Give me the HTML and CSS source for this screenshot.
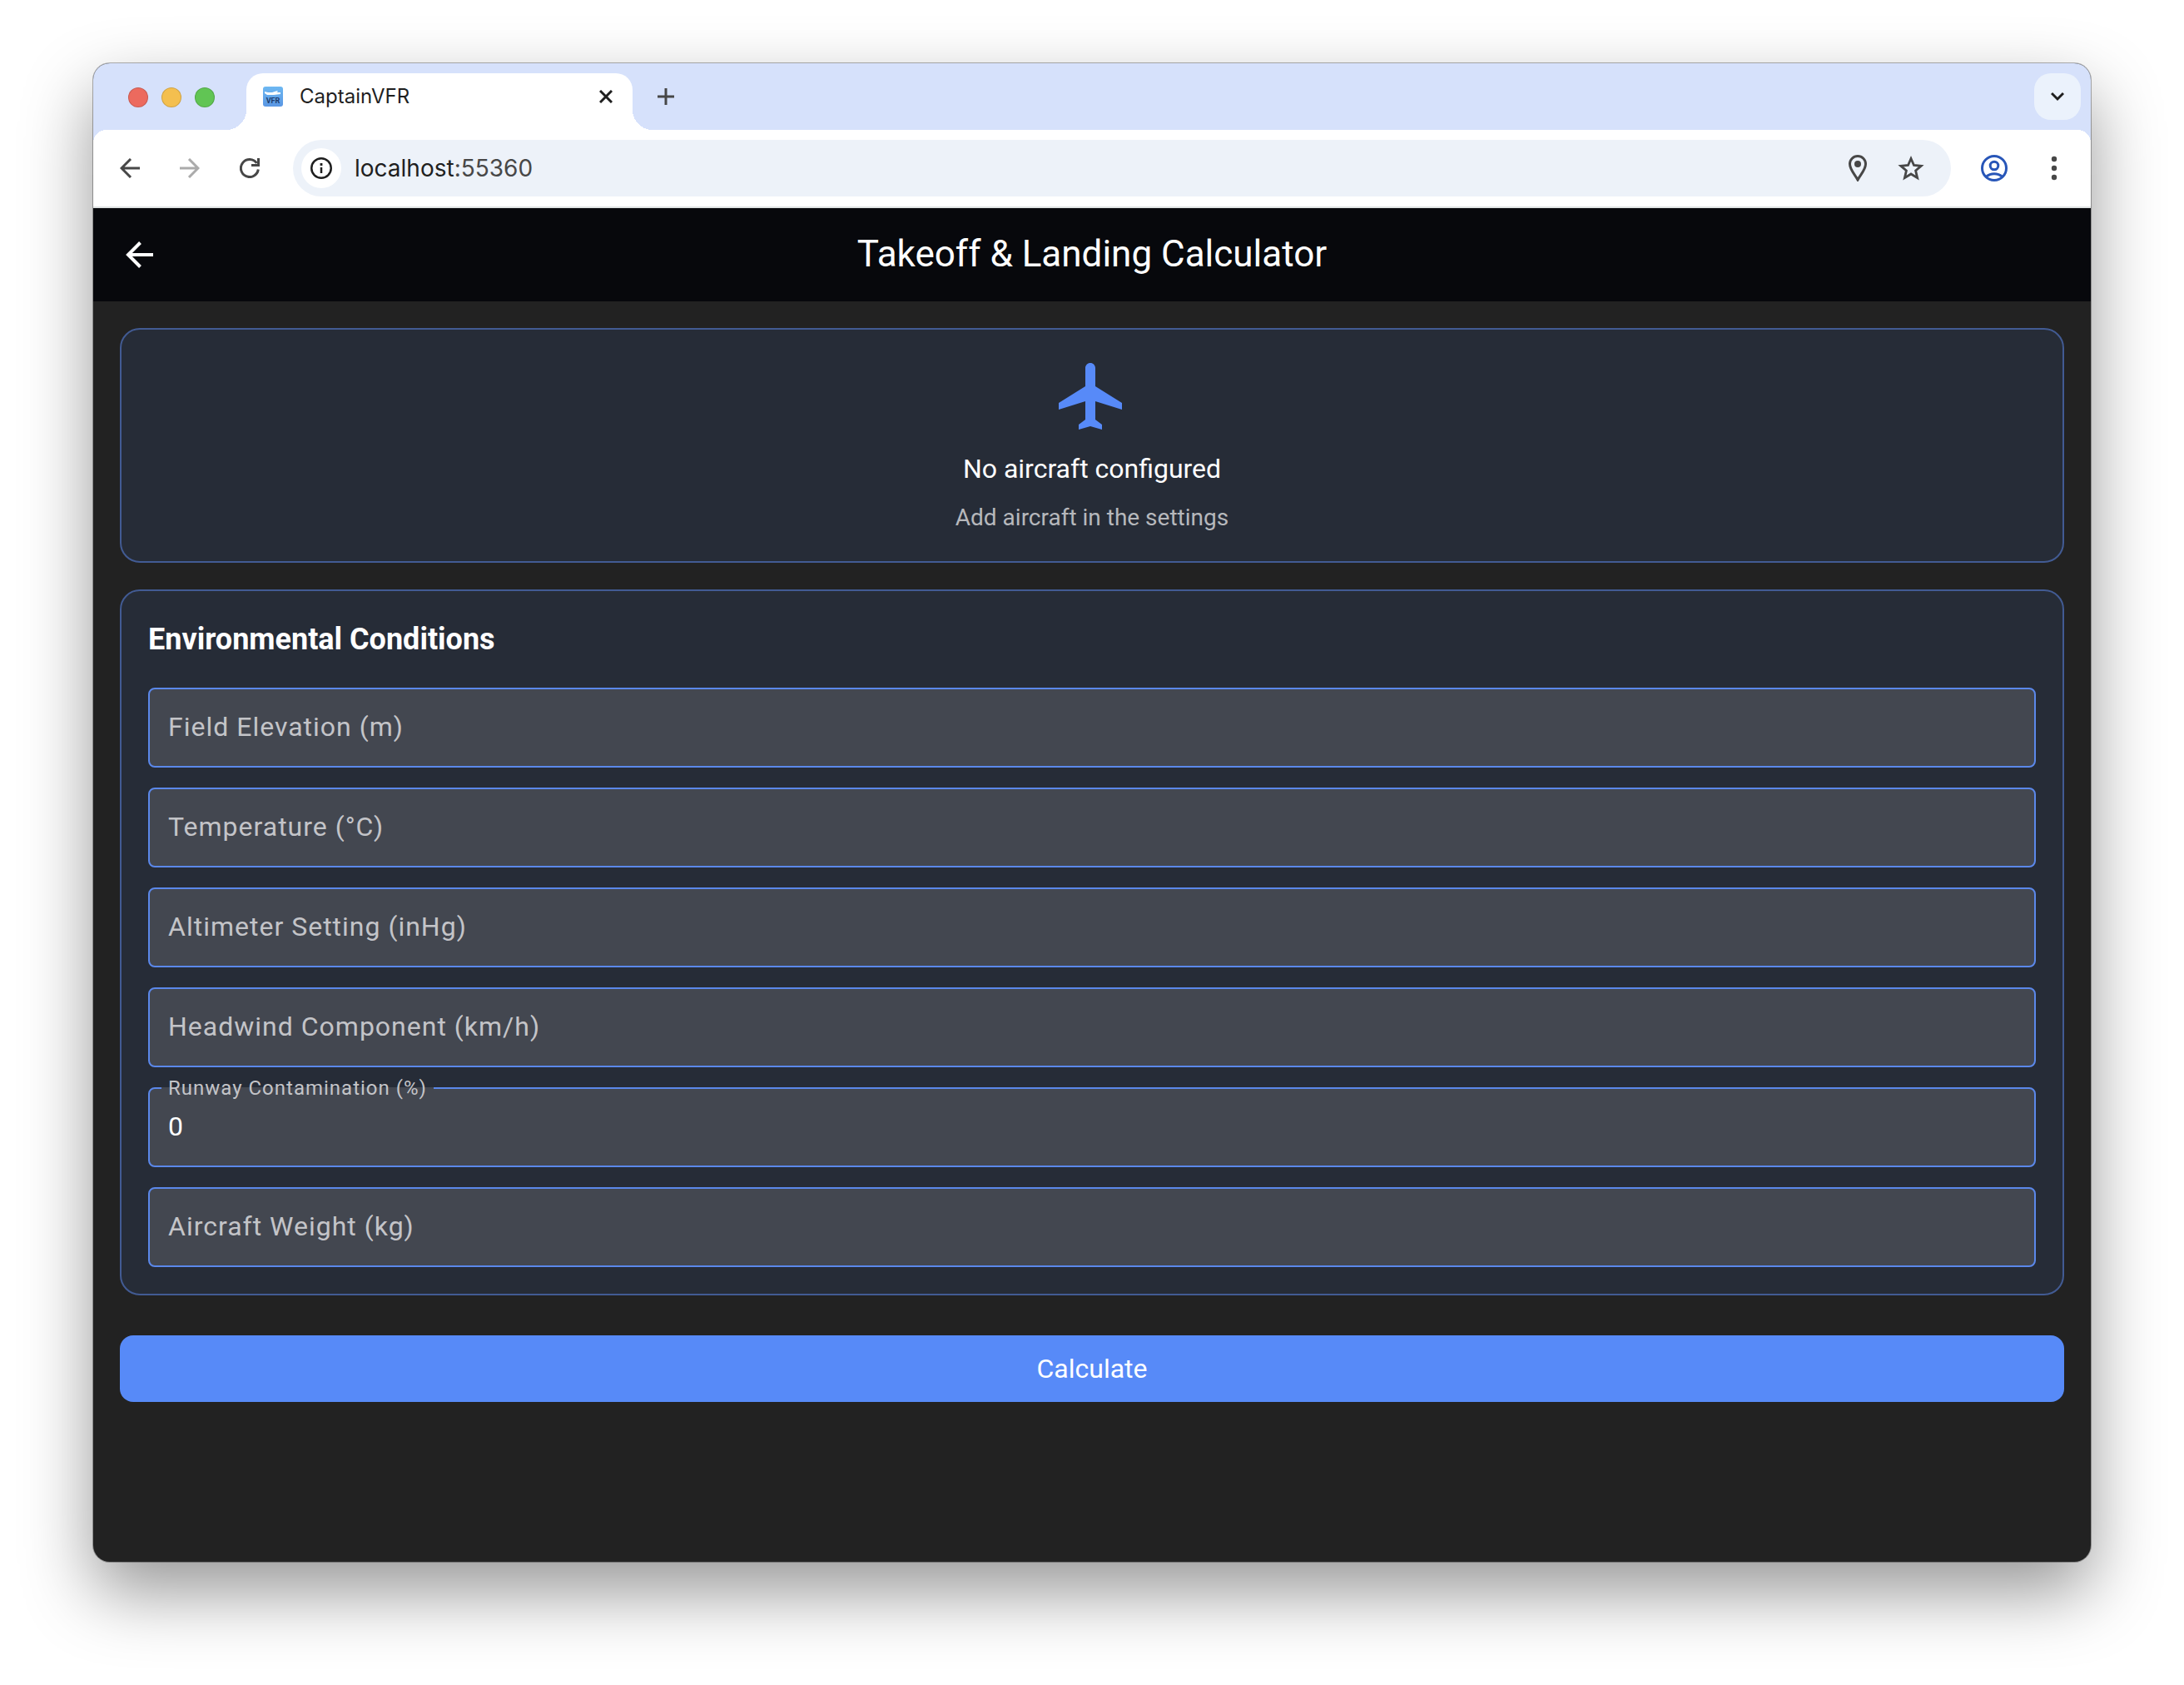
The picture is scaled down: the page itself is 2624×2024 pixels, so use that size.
FILE: index.html
```html
<!DOCTYPE html>
<html lang="en">
<head>
<meta charset="utf-8">
<title>CaptainVFR</title>
<link rel="stylesheet" href="styles.css">
</head>
<body>
<div class="window">
  <div class="tabstrip">
    <div class="lights">
      <span class="light light-close"></span>
      <span class="light light-min"></span>
      <span class="light light-max"></span>
    </div>
    <div class="tab">
      <svg class="favicon" width="24" height="24" viewBox="0 0 24 24" aria-hidden="true">
        <defs><linearGradient id="sky" x1="0" y1="0" x2="0" y2="1"><stop offset="0" stop-color="#6db8f2"/><stop offset="1" stop-color="#5a96e3"/></linearGradient></defs>
        <rect width="24" height="24" rx="3" fill="url(#sky)"/>
        <path d="M2 6l4 1 5 0 6-2 1 1-2 1h5v2l-8 1H5L2 8z" fill="#fff"/>
        <text x="12" y="20" text-anchor="middle" class="favicon-text">VFR</text>
      </svg>
      <span class="tab-title">CaptainVFR</span>
      <button class="icon-button tab-close" aria-label="Close tab">
        <svg width="16" height="16" viewBox="0 0 16 16" fill="none" stroke="#1f1f1f" stroke-width="3"><path d="M1 1l14 14M15 1L1 15"/></svg>
      </button>
    </div>
    <button class="icon-button new-tab" aria-label="New tab">
      <svg width="20" height="20" viewBox="0 0 20 20" fill="none" stroke="#474747" stroke-width="3"><path d="M10 0v20M0 10h20"/></svg>
    </button>
    <button class="icon-button tab-search" aria-label="Search tabs">
      <svg width="16" height="16" viewBox="0 0 16 16" fill="none" stroke="#1f1f1f" stroke-width="3"><path d="M1 4l7 7 7-7"/></svg>
    </button>
  </div>

  <div class="toolbar">
    <div class="nav">
      <button class="icon-button" aria-label="Back">
        <svg width="24" height="24" viewBox="0 0 24 24" fill="none" stroke="#474747" stroke-width="3"><path d="M24 12H2M13 1L2 12l11 11"/></svg>
      </button>
      <button class="icon-button" aria-label="Forward">
        <svg width="24" height="24" viewBox="0 0 24 24" fill="none" stroke="#ababab" stroke-width="3"><path d="M0 12h22M11 1l11 11-11 11"/></svg>
      </button>
      <button class="icon-button" aria-label="Reload">
        <svg width="24" height="24" viewBox="0 0 24 24" fill="none" stroke="#474747" stroke-width="3"><path d="M22.300 13.500A10.500 10.500 0 1 1 20.500 6M22.500 0v8.500H14"/></svg>
      </button>
    </div>
    <div class="omnibox">
      <button class="icon-button site-info" aria-label="Site information">
        <svg width="26" height="26" viewBox="0 0 26 26" fill="none" stroke="#1f1f1f" stroke-width="2.500"><circle cx="13" cy="13" r="11.750"/><path d="M13 12v7"/><path d="M13 7v3" stroke-width="2.800"/></svg>
      </button>
      <span class="url">localhost<span class="port">:55360</span></span>
      <button class="icon-button" aria-label="Location">
        <svg width="32" height="32" viewBox="0 0 32 32"><path d="M16 30C13 24 6.500 18 6.500 11a9.500 9.500 0 0 1 19 0C25.500 18 19 24 16 30z" fill="none" stroke="#474747" stroke-width="3"/><circle cx="16" cy="11" r="4" fill="#474747"/></svg>
      </button>
      <button class="icon-button" aria-label="Bookmark">
        <svg width="32" height="32" viewBox="0 0 32 32" fill="none" stroke="#474747" stroke-width="2.800"><path d="M16 4.500l3.500 8 8.700.8-6.600 5.700 2 8.600-7.600-4.600-7.600 4.600 2-8.600-6.600-5.700 8.700-.8z"/></svg>
      </button>
    </div>
    <button class="icon-button" aria-label="Profile">
      <svg width="32" height="32" viewBox="0 0 32 32" fill="none" stroke="#2856b8" stroke-width="3"><circle cx="16" cy="16" r="14.500"/><circle cx="16" cy="13" r="4.800"/><path d="M6 26.500c6-5 14-5 20 0"/></svg>
    </button>
    <button class="icon-button" aria-label="Menu">
      <svg width="32" height="32" viewBox="0 0 32 32" fill="#474747"><circle cx="16" cy="5" r="3.200"/><circle cx="16" cy="16" r="3.200"/><circle cx="16" cy="27" r="3.200"/></svg>
    </button>
  </div>

  <header class="appbar">
    <button class="icon-button" aria-label="Go back">
      <svg width="36" height="36" viewBox="0 0 36 36" fill="none" stroke="#fff" stroke-width="4"><path d="M34 18H4M18.500 3.500L4 18l14.500 14.500"/></svg>
    </button>
    <h1 class="title">Takeoff &amp; Landing Calculator</h1>
  </header>

  <main class="content">
    <section class="card empty">
      <svg class="plane" width="96" height="96" viewBox="0 0 24 24" fill="#578af8" aria-hidden="true"><path d="M21 16v-2l-8-5V3.500c0-.83-.67-1.500-1.500-1.500S10 2.670 10 3.500V9l-8 5v2l8-2.500V19l-2 1.500V22l3.500-1 3.500 1v-1.500L13 19v-5.500l8 2.500z"/></svg>
      <p class="empty-title">No aircraft configured</p>
      <p class="empty-hint">Add aircraft in the settings</p>
    </section>

    <form class="form">
      <section class="card conditions">
        <h2 class="heading">Environmental Conditions</h2>
        <div class="fields">
          <div class="field"><input class="input" id="elevation" type="text"><label class="label" for="elevation">Field Elevation (m)</label></div>
          <div class="field"><input class="input" id="temperature" type="text"><label class="label" for="temperature">Temperature (°C)</label></div>
          <div class="field"><input class="input" id="altimeter" type="text"><label class="label" for="altimeter">Altimeter Setting (inHg)</label></div>
          <div class="field"><input class="input" id="headwind" type="text"><label class="label" for="headwind">Headwind Component (km/h)</label></div>
          <div class="field"><input class="input" id="contamination" type="text" value="0"><label class="label label-floating" for="contamination">Runway Contamination (%)</label></div>
          <div class="field"><input class="input" id="weight" type="text"><label class="label" for="weight">Aircraft Weight (kg)</label></div>
        </div>
      </section>
      <button class="calculate" type="button">Calculate</button>
    </form>
  </main>
</div>
</body>
</html>
```

FILE: styles.css
```css
* {
  box-sizing: border-box;
}

body {
  display: flex;
  min-height: 100vh;
  margin: 0;
  padding: 76px 112px 148px;
  background: #fff;
  font-family: Roboto, "Liberation Sans", sans-serif;
}

h1,
h2,
p {
  margin: 0;
}

button {
  padding: 0;
  border: 0;
  font: inherit;
}

svg {
  display: block;
}

.window {
  display: flex;
  flex: 1;
  flex-direction: column;
  min-width: 0;
  overflow: hidden;
  border-radius: 20px;
  background: #222;
  box-shadow: 0 0 0 1px rgba(0, 0, 0, 0.3), 0 36px 84px rgba(0, 0, 0, 0.41);
}

.icon-button {
  display: flex;
  flex: none;
  align-items: center;
  justify-content: center;
  background: none;
}

/* Tab strip */
.tabstrip {
  display: flex;
  align-items: flex-end;
  height: 80px;
  padding: 0 12px 0 42px;
  background: #d6e1fb;
  font-family: Inter, "Liberation Sans", sans-serif;
}

.lights {
  display: flex;
  gap: 16px;
  align-self: center;
  width: 142px;
  padding-top: 2px;
}

.light {
  width: 24px;
  height: 24px;
  border: 1px solid rgba(0, 0, 0, 0.15);
  border-radius: 50%;
}

.light-close {
  background: #ec6a5e;
}

.light-min {
  background: #f4bf4f;
}

.light-max {
  background: #61c554;
}

.tab {
  position: relative;
  display: flex;
  align-items: center;
  width: 464px;
  height: 68px;
  padding: 0 24px 12px 20px;
  border-radius: 20px 20px 0 0;
  background: #fff;
}

.tab::before,
.tab::after {
  position: absolute;
  bottom: 0;
  width: 24px;
  height: 24px;
  content: "";
}

.tab::before {
  right: 100%;
  background: radial-gradient(circle at 0 0, transparent 24px, #fff 24px);
}

.tab::after {
  left: 100%;
  background: radial-gradient(circle at 100% 0, transparent 24px, #fff 24px);
}

.favicon-text {
  fill: #1d3c6e;
  font: bold 9px Roboto, sans-serif;
}

.tab-title {
  flex: 1;
  padding-left: 20px;
  color: #1f1f1f;
  font-size: 24px;
  line-height: 32px;
}

.new-tab {
  width: 56px;
  height: 56px;
  margin: 0 auto 12px 12px;
}

.tab-search {
  width: 56px;
  height: 56px;
  margin-bottom: 12px;
  border-radius: 20px;
  background: #ebf2fc;
}

/* Address bar */
.toolbar {
  display: flex;
  align-items: center;
  height: 94px;
  padding: 0 28px 0 32px;
  border-bottom: 2px solid #dfe3e3;
  background:
    radial-gradient(circle at 16px 16px, #fff 16px, #d6e1fb 16px) 0 0 / 16px 16px no-repeat,
    radial-gradient(circle at 0 16px, #fff 16px, #d6e1fb 16px) 100% 0 / 16px 16px no-repeat,
    #fff;
  font-family: Inter, "Liberation Sans", sans-serif;
}

.nav {
  display: flex;
  gap: 48px;
  margin-right: 40px;
}

.omnibox {
  display: flex;
  flex: 1;
  gap: 32px;
  align-items: center;
  height: 68px;
  margin-right: 36px;
  padding: 0 32px 0 10px;
  border-radius: 34px;
  background: #edf2f9;
}

.site-info {
  width: 48px;
  height: 48px;
  margin-right: -16px;
  border-radius: 50%;
  background: #fff;
}

.url {
  flex: 1;
  color: #1f1f1f;
  font-size: 28px;
  line-height: 40px;
}

.port {
  color: #474747;
}

.toolbar > .icon-button + .icon-button {
  margin-left: 40px;
}

/* App bar */
.appbar {
  display: grid;
  grid-template-columns: 36px 1fr 36px;
  align-items: center;
  height: 112px;
  padding: 0 38px;
  background: #07080c;
}

.title {
  padding-bottom: 2px;
  color: #fff;
  font-size: 44px;
  font-weight: 400;
  line-height: 56px;
  text-align: center;
}

/* Page */
.content {
  display: flex;
  flex-direction: column;
  gap: 32px;
  padding: 32px;
}

.card {
  padding: 32px;
  border: 2px solid #425b93;
  border-radius: 24px;
  background: #262c37;
}

.empty {
  display: flex;
  flex-direction: column;
  align-items: center;
}

.empty-title {
  margin: 15px 0;
  color: #fff;
  font-size: 32px;
  line-height: 48px;
}

.empty-hint {
  color: #b6b8bc;
  font-size: 28px;
  line-height: 40px;
}

.form {
  display: flex;
  flex-direction: column;
  gap: 48px;
}

.heading {
  margin-bottom: 32px;
  color: #fff;
  font-size: 36px;
  font-weight: 700;
  line-height: 52px;
}

.fields {
  display: flex;
  flex-direction: column;
  gap: 24px;
}

.field {
  position: relative;
}

.input {
  display: block;
  width: 100%;
  height: 96px;
  padding: 0 22px 2px;
  border: 2px solid #5b88ea;
  border-radius: 8px;
  background: #434750;
  color: #fff;
  font: 32px Roboto, sans-serif;
}

.label {
  position: absolute;
  top: 24px;
  left: 24px;
  color: #c3c4c8;
  font-size: 32px;
  letter-spacing: 1px;
  line-height: 46px;
}

/* The strip behind the text opens the notch in the field's border. */
.label-floating {
  top: -16px;
  left: 16px;
  padding: 0 8px;
  background: linear-gradient(#434750, #434750) 0 16px / 100% 2px no-repeat;
  font-size: 24px;
  line-height: 34px;
}

.calculate {
  height: 80px;
  border-radius: 16px;
  background: #578af8;
  color: #fff;
  font-size: 32px;
}
```
